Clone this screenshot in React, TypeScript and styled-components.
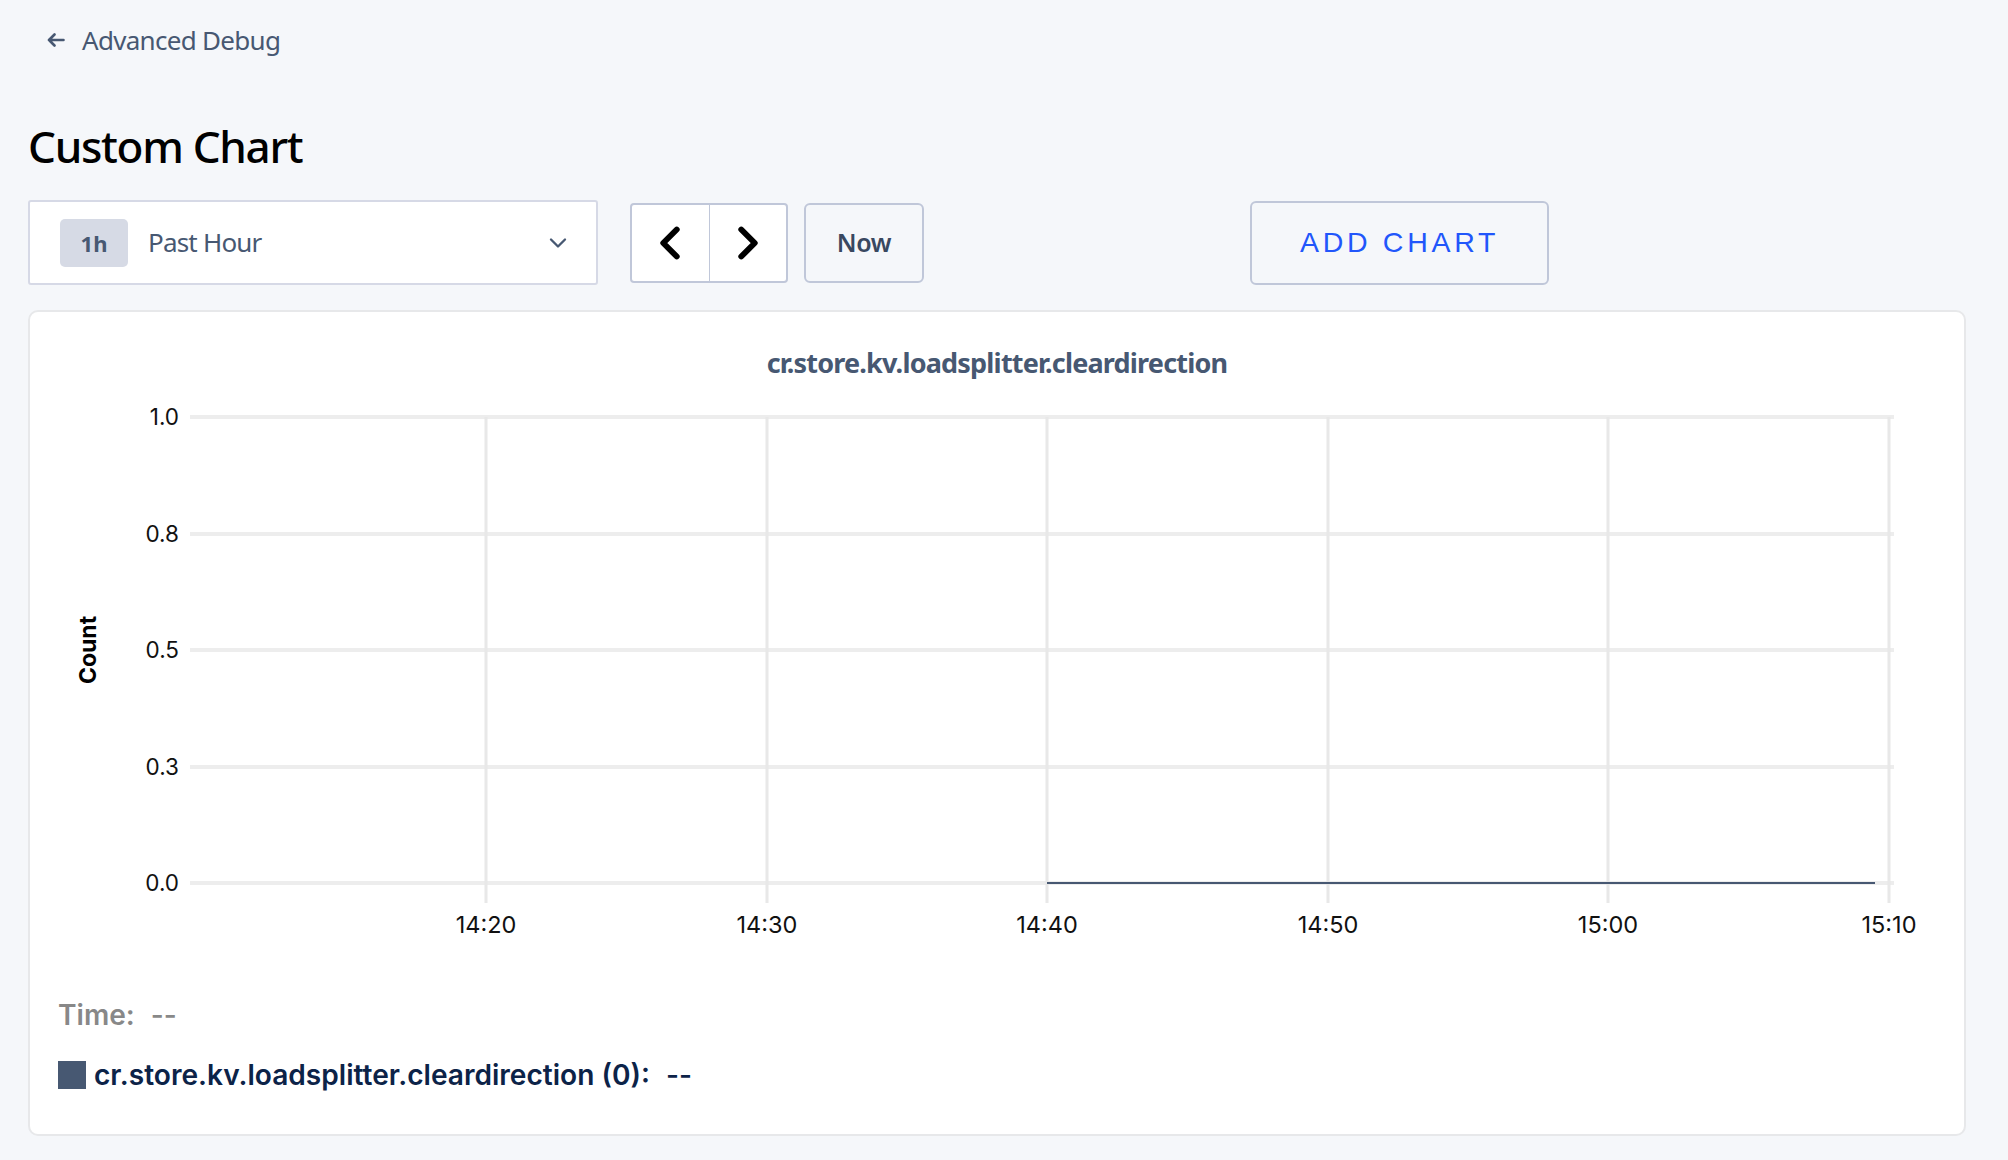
import React from "react";
import styled, { createGlobalStyle } from "styled-components";
import { ChevronDown, ChevronLeft, ChevronRight } from "lucide-react";

const UI_FONT = `"Noto Sans", "Liberation Sans", sans-serif`;
const CHART_FONT = `Inter, "Liberation Sans", sans-serif`;

const GlobalStyle = createGlobalStyle`
  html, body {
    margin: 0;
    padding: 0;
    background: #f5f7fa;
  }
`;

const Page = styled.div`
  width: 2008px;
  height: 1160px;
  box-sizing: border-box;
  padding: 22px 42px 0 28px;
  background: #f5f7fa;
  font-family: ${UI_FONT};
  overflow: hidden;
`;

const BackLink = styled.a`
  display: flex;
  align-items: center;
  gap: 17px;
  height: 36px;
  margin-left: 19px;
  color: #475872;
  font-size: 26px;
  letter-spacing: -0.7px;
`;

const Title = styled.h1`
  margin: 57px 0 0;
  height: 63px;
  line-height: 62px;
  font-size: 44px;
  font-weight: 500;
  letter-spacing: -1.3px;
  color: #000;
`;

const Toolbar = styled.div`
  display: flex;
  align-items: center;
  height: 85px;
  margin-top: 22px;
`;

const Select = styled.div`
  display: flex;
  align-items: center;
  width: 570px;
  height: 85px;
  box-sizing: border-box;
  padding: 0 24px 0 30px;
  background: #fff;
  border: 2px solid #d6d9e6;
  border-radius: 3px;
  color: #475872;
  font-size: 26px;
  letter-spacing: -0.8px;
`;

const Badge = styled.span`
  display: flex;
  align-items: center;
  justify-content: center;
  width: 68px;
  height: 48px;
  margin-right: 20px;
  background: #d6dae5;
  border-radius: 5px;
  font-size: 22px;
  font-weight: 700;
  letter-spacing: 0;
`;

const SelectLabel = styled.span`
  flex: 1;
  padding-bottom: 2px;
`;

const Pager = styled.div`
  display: flex;
  width: 158px;
  height: 80px;
  margin-left: 32px;
  box-sizing: border-box;
  background: #fff;
  border: 2px solid #c0c7d9;
  border-radius: 4px;
`;

const PagerButton = styled.span<{ $divided?: boolean }>`
  flex: 1;
  display: flex;
  align-items: center;
  justify-content: center;
  color: #000;
  border-left: ${(p) => (p.$divided ? "1.5px solid #c0c7d9" : "none")};
`;

const OutlineButton = styled.span`
  display: flex;
  align-items: center;
  justify-content: center;
  box-sizing: border-box;
  width: 120px;
  height: 80px;
  margin-left: 16px;
  padding-bottom: 2px;
  border: 2px solid #c0c7d9;
  border-radius: 6px;
  color: #394860;
  font-size: 25px;
  font-weight: 600;
  letter-spacing: -0.4px;
`;

const AddChart = styled(OutlineButton)`
  width: 299px;
  height: 84px;
  margin-left: 326px;
  padding-bottom: 0;
  color: #2156fb;
  font-family: "Liberation Sans", sans-serif;
  font-size: 28.5px;
  font-weight: 400;
  letter-spacing: 3.7px;
`;

const Card = styled.section`
  box-sizing: border-box;
  width: 1938px;
  height: 826px;
  margin-top: 25px;
  background: #fff;
  border: 2px solid #e7e8ea;
  border-radius: 10px;
`;

const ChartTitle = styled.h2`
  margin: 33px 0 0;
  height: 35px;
  line-height: 36px;
  text-align: center;
  color: #475872;
  font-size: 27px;
  font-weight: 700;
  letter-spacing: -0.8px;
`;

const Plot = styled.svg`
  display: block;
  font-family: ${CHART_FONT};
`;

const Legend = styled.div`
  margin: 0 0 0 28px;
  font-family: ${CHART_FONT};
  font-size: 28.1px;
  font-weight: 600;
`;

const LegendRow = styled.div<{ $muted?: boolean }>`
  display: flex;
  align-items: center;
  height: 36px;
  margin-bottom: 24px;
  color: ${(p) => (p.$muted ? "#888" : "#0c2348")};
`;

const Swatch = styled.span`
  width: 28px;
  height: 28px;
  margin-right: 8px;
  background: #475872;
`;

const LegendValue = styled.span`
  margin-left: 16px;
  font-weight: 500;
`;

// page coordinates of the plot's top left corner, the svg sits there in the card
const originX = 30;
const originY = 380;
const hLines = [
  { label: "1.0", y: 417 },
  { label: "0.8", y: 534 },
  { label: "0.5", y: 650 },
  { label: "0.3", y: 767 },
  { label: "0.0", y: 883 },
];
const vLines = [
  { label: "14:20", x: 486 },
  { label: "14:30", x: 767 },
  { label: "14:40", x: 1047 },
  { label: "14:50", x: 1328 },
  { label: "15:00", x: 1608 },
  { label: "15:10", x: 1889 },
];

function Chart() {
  return (
    <Plot width={1934} height={617} viewBox={`${originX} ${originY} 1934 617`}>
      {hLines.map((l) => (
        <g key={l.label}>
          <line x1={190} x2={1894} y1={l.y} y2={l.y} stroke="#ededed" strokeWidth={4} />
          <text x={179} y={l.y + 8} textAnchor="end" fontSize={22.5} fill="#111">
            {l.label}
          </text>
        </g>
      ))}
      {vLines.map((l) => (
        <g key={l.label}>
          <line x1={l.x} x2={l.x} y1={417} y2={903} stroke="#e8e8e8" strokeWidth={3} />
          <text x={l.x} y={933} textAnchor="middle" fontSize={23.5} fill="#111">
            {l.label}
          </text>
        </g>
      ))}
      <line x1={1047} x2={1875} y1={883} y2={883} stroke="#475872" strokeWidth={2.2} />
      <text
        transform="translate(96 650) rotate(-90)"
        textAnchor="middle"
        fontSize={23}
        fontWeight={700}
        fill="#000"
      >
        Count
      </text>
    </Plot>
  );
}

export default function App() {
  return (
    <Page>
      <GlobalStyle />
      <BackLink>
        <svg width={18} height={14} viewBox="0 0 18 14" fill="none" stroke="currentColor" strokeWidth={2.6} strokeLinecap="round" strokeLinejoin="round">
          <path d="M16.5 7H2M7.5 1.5 2 7l5.5 5.5" />
        </svg>
        Advanced Debug
      </BackLink>
      <Title>Custom Chart</Title>
      <Toolbar>
        <Select>
          <Badge>1h</Badge>
          <SelectLabel>Past Hour</SelectLabel>
          <ChevronDown size={28} strokeWidth={2} />
        </Select>
        <Pager>
          <PagerButton>
            <ChevronLeft size={54} strokeWidth={2.6} />
          </PagerButton>
          <PagerButton $divided>
            <ChevronRight size={54} strokeWidth={2.6} />
          </PagerButton>
        </Pager>
        <OutlineButton>Now</OutlineButton>
        <AddChart>ADD CHART</AddChart>
      </Toolbar>
      <Card>
        <ChartTitle>cr.store.kv.loadsplitter.cleardirection</ChartTitle>
        <Chart />
        <Legend>
          <LegendRow $muted>
            Time:
            <LegendValue>--</LegendValue>
          </LegendRow>
          <LegendRow>
            <Swatch />
            cr.store.kv.loadsplitter.cleardirection (0):
            <LegendValue>--</LegendValue>
          </LegendRow>
        </Legend>
      </Card>
    </Page>
  );
}
